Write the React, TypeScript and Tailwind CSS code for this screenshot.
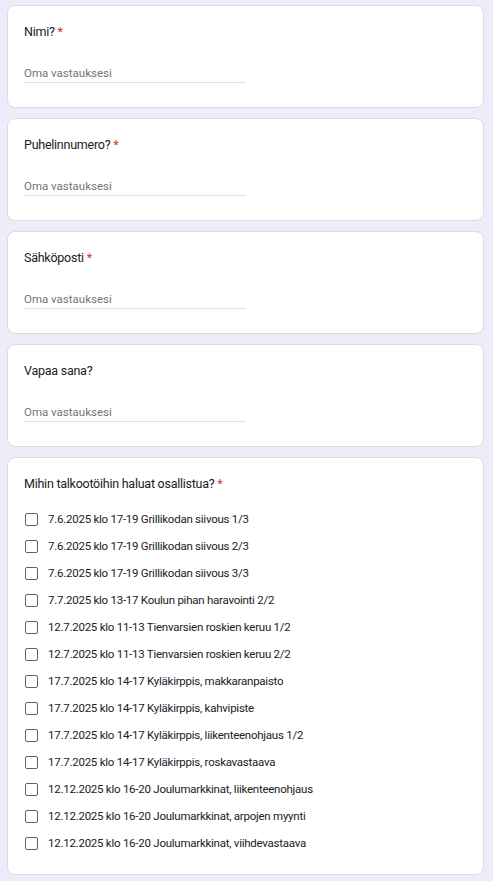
const options = [
  '7.6.2025 klo 17-19 Grillikodan siivous 1/3',
  '7.6.2025 klo 17-19 Grillikodan siivous 2/3',
  '7.6.2025 klo 17-19 Grillikodan siivous 3/3',
  '7.7.2025 klo 13-17 Koulun pihan haravointi 2/2',
  '12.7.2025 klo 11-13 Tienvarsien roskien keruu 1/2',
  '12.7.2025 klo 11-13 Tienvarsien roskien keruu 2/2',
  '17.7.2025 klo 14-17 Kyläkirppis, makkaranpaisto',
  '17.7.2025 klo 14-17 Kyläkirppis, kahvipiste',
  '17.7.2025 klo 14-17 Kyläkirppis, liikenteenohjaus 1/2',
  '17.7.2025 klo 14-17 Kyläkirppis, roskavastaava',
  '12.12.2025 klo 16-20 Joulumarkkinat, liikenteenohjaus',
  '12.12.2025 klo 16-20 Joulumarkkinat, arpojen myynti',
  '12.12.2025 klo 16-20 Joulumarkkinat, viihdevastaava',
];

const Title = ({ text, required }: { text: string; required?: boolean }) => (
  <div className="text-[12.5px] leading-[16px] tracking-[-0.25px] text-[#202124]">
    {text}
    {required && <span className="text-[#d93025]"> *</span>}
  </div>
);

const TextQuestion = ({ title, required }: { title: string; required?: boolean }) => (
  <div className="h-[103px] rounded-[8px] border border-[#dadce0] bg-white px-[16px] pt-[18px]">
    <Title text={title} required={required} />
    <div className="mt-[26px] w-[222px] border-b border-[#e0e0e0] pb-[2px] text-[11.5px] leading-[14px] text-[#70757a]">
      Oma vastauksesi
    </div>
  </div>
);

export default function App() {
  return (
    <div className="min-h-[881px] bg-[#f0ebf8] px-[7px] pt-[5px] pb-[7px] font-['Roboto',sans-serif]">
      <div className="flex w-[477px] flex-col gap-[10px]">
        <TextQuestion title="Nimi?" required />
        <TextQuestion title="Puhelinnumero?" required />
        <TextQuestion title="Sähköposti" required />
        <TextQuestion title="Vapaa sana?" />
        <div className="rounded-[8px] border border-[#dadce0] bg-white px-[16px] pt-[18px] pb-[22px]">
          <Title text="Mihin talkootöihin haluat osallistua?" required />
          <div className="mt-[18px] flex flex-col gap-[9px]">
            {options.map((o) => (
              <label key={o} className="flex h-[18px] items-center">
                <span className="ml-[1px] h-[13px] w-[13px] shrink-0 rounded-[2px] border-[1.5px] border-[#5f6368]" />
                <span className="ml-[10px] text-[11.5px] leading-[18px] tracking-[-0.25px] text-[#202124]">{o}</span>
              </label>
            ))}
          </div>
        </div>
      </div>
    </div>
  );
}
